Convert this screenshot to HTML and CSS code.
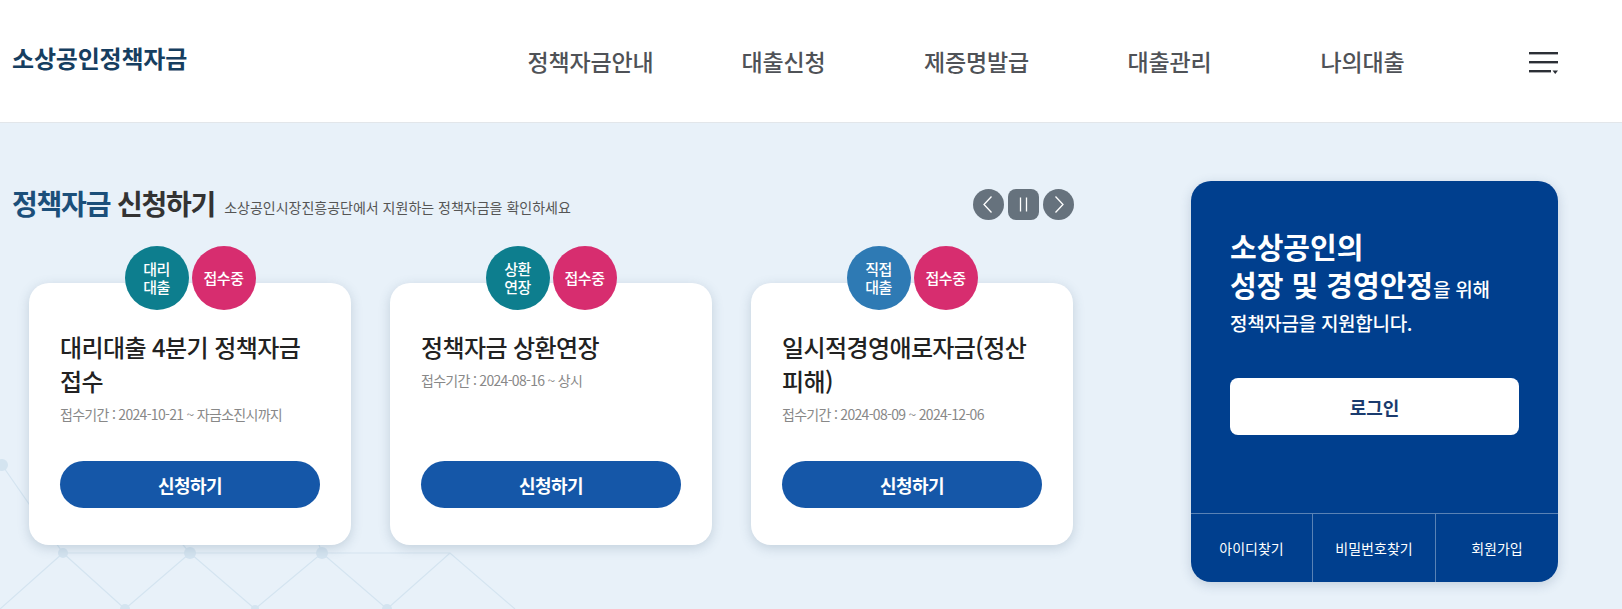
FILE: index.html
```html
<!DOCTYPE html>
<html lang="ko">
<head>
<meta charset="utf-8">
<title>소상공인정책자금</title>
<link rel="stylesheet" href="styles.css">
</head>
<body>
<header class="header">
  <div class="logo">소상공인정책자금</div>
  <nav class="gnb">
    <a class="gnb-item">정책자금안내</a>
    <a class="gnb-item">대출신청</a>
    <a class="gnb-item">제증명발급</a>
    <a class="gnb-item">대출관리</a>
    <a class="gnb-item">나의대출</a>
  </nav>
  <button class="menu-btn" aria-label="전체메뉴">
    <svg width="30" height="24" viewBox="0 0 30 24">
      <rect x="0" y="2" width="29" height="2.4" fill="#2b2f36"/>
      <rect x="0" y="11" width="29" height="2.4" fill="#2b2f36"/>
      <rect x="0" y="20" width="22" height="2.4" fill="#2b2f36"/>
      <path d="M23.5 20.5 H29 L26.25 24 Z" fill="#2b2f36"/>
    </svg>
  </button>
</header>

<main class="main">
  <svg class="bg-net" width="620" height="190" viewBox="0 0 620 190">
    <g stroke="#d4e4f0" stroke-width="1.2" fill="none">
      <path d="M2 42 L63 130 L125 186 L190 130 L255 186 L322 130 L387 186 L450 130 L515 186 M63 130 L190 130 L322 130 L450 130 M2 42 L-20 10 M63 130 L0 186 M190 130 L130 60 M322 130 L300 70"/>
    </g>
    <g fill="#d4e4f0">
      <circle cx="2" cy="42" r="6"/>
      <circle cx="63" cy="130" r="5"/>
      <circle cx="190" cy="130" r="6"/>
      <circle cx="322" cy="130" r="6"/>
      <circle cx="125" cy="186" r="5"/>
      <circle cx="387" cy="186" r="5"/>
      <circle cx="255" cy="186" r="4"/>
    </g>
  </svg>

  <div class="content">
    <section class="apply">
      <div class="apply-head">
        <h2 class="apply-title"><span class="hl">정책자금</span> 신청하기</h2>
        <p class="apply-desc">소상공인시장진흥공단에서 지원하는 정책자금을 확인하세요</p>
        <div class="slide-ctrl">
          <button class="ctrl ctrl-round" aria-label="이전">
            <svg width="31" height="31" viewBox="0 0 31 31"><path d="M18.5 7.5 L11 15.5 L18.5 23.5" stroke="#fff" stroke-width="1.3" fill="none"/></svg>
          </button>
          <button class="ctrl ctrl-square" aria-label="정지">
            <svg width="31" height="31" viewBox="0 0 31 31"><path d="M12.5 8.5 V22.5 M18.5 8.5 V22.5" stroke="#fff" stroke-width="1.3"/></svg>
          </button>
          <button class="ctrl ctrl-round" aria-label="다음">
            <svg width="31" height="31" viewBox="0 0 31 31"><path d="M12.5 7.5 L20 15.5 L12.5 23.5" stroke="#fff" stroke-width="1.3" fill="none"/></svg>
          </button>
        </div>
      </div>

      <div class="cards">
        <article class="card">
          <div class="badges">
            <span class="badge badge-teal">대리<br>대출</span>
            <span class="badge badge-pink">접수중</span>
          </div>
          <h3 class="card-title">대리대출 4분기 정책자금 접수</h3>
          <p class="card-date">접수기간 : 2024-10-21 ~ 자금소진시까지</p>
          <a class="card-btn">신청하기</a>
        </article>
        <article class="card">
          <div class="badges">
            <span class="badge badge-teal">상환<br>연장</span>
            <span class="badge badge-pink">접수중</span>
          </div>
          <h3 class="card-title">정책자금 상환연장</h3>
          <p class="card-date">접수기간 : 2024-08-16 ~ 상시</p>
          <a class="card-btn">신청하기</a>
        </article>
        <article class="card">
          <div class="badges">
            <span class="badge badge-blue">직접<br>대출</span>
            <span class="badge badge-pink">접수중</span>
          </div>
          <h3 class="card-title">일시적경영애로자금(정산 피해)</h3>
          <p class="card-date">접수기간 : 2024-08-09 ~ 2024-12-06</p>
          <a class="card-btn">신청하기</a>
        </article>
      </div>
    </section>

    <aside class="login-box">
      <div class="login-body">
        <h2 class="login-title">소상공인의<br>성장 및 경영안정<span class="small">을 위해</span></h2>
        <p class="login-sub">정책자금을 지원합니다.</p>
        <a class="login-btn">로그인</a>
      </div>
      <div class="login-links">
        <a class="login-link">아이디찾기</a>
        <a class="login-link">비밀번호찾기</a>
        <a class="login-link">회원가입</a>
      </div>
    </aside>
  </div>
</main>
</body>
</html>
```

FILE: styles.css
```css
* { box-sizing: border-box; }

html, body {
  margin: 0;
  padding: 0;
}

body {
  width: 1622px;
  height: 609px;
  overflow: hidden;
  font-family: "Noto Sans CJK KR", "Noto Sans", sans-serif;
  color: #222;
  background: #e8f1f9;
}

a { text-decoration: none; color: inherit; }
h2, h3, p { margin: 0; font-weight: inherit; }
button { font-family: inherit; border: 0; padding: 0; background: none; cursor: pointer; }

/* header */
.header {
  height: 123px;
  background: #fff;
  border-bottom: 1px solid #e2e6ea;
  display: flex;
  align-items: center;
  padding-left: 12px;
}

.logo {
  width: 482px;
  font-size: 24px;
  font-weight: 700;
  letter-spacing: -0.2px;
  color: #163e60;
  margin-top: -8px;
}

.gnb {
  display: flex;
  width: 965px;
}

.gnb-item {
  width: 193px;
  text-align: center;
  font-size: 23px;
  font-weight: 500;
  letter-spacing: -0.2px;
  color: #4f5257;
}

.menu-btn {
  margin-left: 70px;
  width: 30px;
  height: 24px;
  display: flex;
  margin-top: 2px;
}

/* main */
.main {
  position: relative;
  height: 486px;
  background: #e8f1f9;
  overflow: hidden;
}

.bg-net {
  position: absolute;
  left: 0;
  top: 300px;
}

.content {
  position: relative;
  display: flex;
  padding: 58px 0 0 12px;
}

.apply {
  width: 1062px;
}

.apply-head {
  height: 44px;
  display: flex;
  align-items: center;
}

.apply-title {
  font-size: 28px;
  font-weight: 700;
  letter-spacing: -1.2px;
  color: #333;
}

.apply-title .hl { color: #1b4f7a; }

.apply-desc {
  margin-left: 9px;
  margin-top: 8px;
  font-size: 14px;
  letter-spacing: 0;
  color: #555;
}

.slide-ctrl {
  margin-left: auto;
  display: flex;
  gap: 4px;
  margin-top: 2px;
}

.ctrl {
  width: 31px;
  height: 31px;
  background: #66727d;
  display: flex;
}

.ctrl-round { border-radius: 50%; }
.ctrl-square { border-radius: 8px; }

.cards {
  display: flex;
  gap: 39px;
  margin: 21px 0 0 17px;
}

.card {
  position: relative;
  width: 322px;
  height: 262px;
  margin-top: 37px;
  background: #fff;
  border-radius: 20px;
  box-shadow: 0 3px 12px rgba(60, 90, 120, 0.22);
  padding: 47px 31px 37px;
  display: flex;
  flex-direction: column;
}

.badges {
  position: absolute;
  top: -37px;
  left: 0;
  right: 0;
  display: flex;
  justify-content: center;
  gap: 3px;
}

.badge {
  width: 64px;
  height: 64px;
  border-radius: 50%;
  display: flex;
  align-items: center;
  justify-content: center;
  text-align: center;
  color: #fff;
  font-size: 15px;
  font-weight: 500;
  line-height: 18px;
  letter-spacing: -0.5px;
}

.badge-teal { background: #0d7e8e; }
.badge-pink { background: #d72d6f; }
.badge-blue { background: #2e7ab4; }

.card-title {
  font-size: 24px;
  font-weight: 500;
  line-height: 34px;
  letter-spacing: -0.6px;
  word-break: keep-all;
  color: #222;
}

.card-date {
  margin-top: 6px;
  font-size: 14px;
  letter-spacing: -0.7px;
  color: #888;
}

.card-btn {
  margin-top: auto;
  height: 47px;
  border-radius: 24px;
  background: #1557a8;
  color: #fff;
  font-size: 18px;
  font-weight: 700;
  letter-spacing: -0.5px;
  display: flex;
  align-items: center;
  justify-content: center;
}

/* login box */
.login-box {
  margin-left: 117px;
  width: 367px;
  height: 401px;
  background: #003f8e;
  border-radius: 20px;
  box-shadow: 0 3px 12px rgba(40, 70, 110, 0.2);
  display: flex;
  flex-direction: column;
  color: #fff;
}

.login-body {
  padding: 46px 39px 0;
}

.login-title {
  font-size: 29px;
  font-weight: 700;
  line-height: 38px;
  letter-spacing: 0;
}

.login-title .small {
  font-size: 19px;
  font-weight: 500;
  letter-spacing: -0.3px;
}

.login-sub {
  font-size: 19px;
  line-height: 30px;
  font-weight: 500;
  letter-spacing: -0.3px;
}

.login-btn {
  margin-top: 40px;
  height: 57px;
  width: 289px;
  background: #fff;
  border-radius: 8px;
  color: #1a3b6e;
  font-size: 18px;
  font-weight: 700;
  display: flex;
  align-items: center;
  justify-content: center;
}

.login-links {
  margin-top: auto;
  height: 69px;
  border-top: 1px solid rgba(255, 255, 255, 0.35);
  display: grid;
  grid-template-columns: 121px 123px 123px;
}

.login-link {
  display: flex;
  align-items: center;
  justify-content: center;
  font-size: 14px;
  letter-spacing: 0;
  color: #fff;
}

.login-link + .login-link {
  border-left: 1px solid rgba(255, 255, 255, 0.35);
}
```
